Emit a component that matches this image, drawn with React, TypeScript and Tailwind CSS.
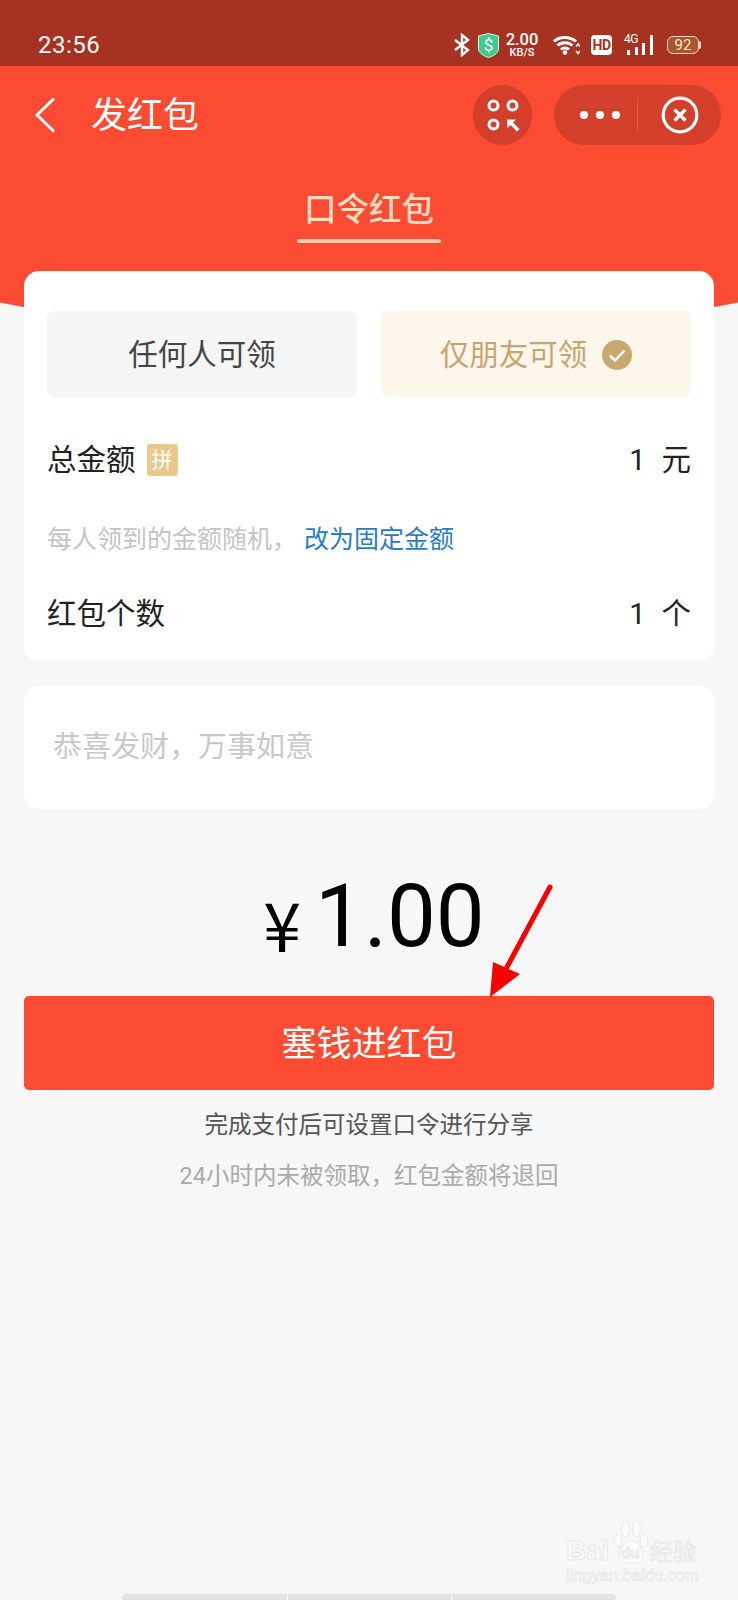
import React from "react";

const cjk = "font-['Roboto','Noto_Sans_CJK_SC',sans-serif]";

function StatusIcons() {
  return (
    <div className="flex items-center h-[26px]">
      <svg width="16" height="24" viewBox="0 0 16 24" fill="none" stroke="#fff" strokeWidth="2.4" className="mr-[8px]">
        <path d="M1 7l13 10-6 5V2l6 5L1 17" />
      </svg>
      <svg width="21" height="25" viewBox="0 0 21 25" className="mr-[6px]">
        <path d="M10.5 0.5L20.5 3v13c0 4-6 7.500-10 8.500C6.500 23.500 0.500 20 0.500 16V3z" fill="#3ecb8f" stroke="#d8f5e8" strokeWidth="1" />
        <text x="10.500" y="18" textAnchor="middle" fontSize="17" fill="#fff" fontFamily="Roboto">$</text>
      </svg>
      <div className="w-[34px] mr-[14px] flex flex-col items-center text-white font-['Roboto',sans-serif] font-medium mt-[-1px]">
        <span className="text-[16.500px] leading-[15px]">2.00</span>
        <span className="text-[11px] leading-[10px] mt-[1px]">KB/S</span>
      </div>
      <svg width="27" height="20" viewBox="0 0 27 20" fill="none" stroke="#fff" className="mr-[11px]">
        <path d="M1 6.500C6 1 17 1 23 6.500" strokeWidth="3" />
        <path d="M4.500 10.500C8 7 15 6.500 19.500 10.500" strokeWidth="3" />
        <path d="M8 14.500c2-2 6-2 8 0" strokeWidth="2.800" />
        <circle cx="12" cy="17.500" r="2.200" fill="#fff" stroke="none" />
        <path d="M23 11.500l2-2.500 2 2.500M23 16l2 2.500 2-2.500" strokeWidth="1.500" />
      </svg>
      <div className="w-[21px] h-[20px] bg-white rounded-[4px] mr-[12px] flex items-center justify-center text-[#a83222] text-[14px] leading-none font-bold font-['Roboto',sans-serif] tracking-[-0.500px]">
        HD
      </div>
      <div className="relative w-[30px] h-[20px] mr-[13px]">
        <span className="absolute left-0 top-[-2px] text-white text-[12px] leading-[12px] tracking-[-0.500px] font-['Roboto',sans-serif]">4G</span>
        <span className="absolute left-[3px] bottom-0 w-[3px] h-[5px] bg-white" />
        <span className="absolute left-[11px] bottom-0 w-[3px] h-[8px] bg-white" />
        <span className="absolute left-[18px] bottom-0 w-[3px] h-[12px] bg-white" />
        <span className="absolute left-[26px] bottom-0 w-[3px] h-[20px] bg-white" />
      </div>
      <div className="flex items-center">
        <div className="w-[32px] h-[18px] rounded-[6px] border border-[#f3d9c4] bg-[#a9552d] flex items-center justify-center text-[#fbe9d8] text-[15px] leading-none font-['Roboto',sans-serif]">
          92
        </div>
        <span className="w-[2px] h-[8px] bg-[#f3d9c4] rounded-r-[2px]" />
      </div>
    </div>
  );
}

function Row({ label, value, unit, badge }: { label: string; value: string; unit: string; badge?: boolean }) {
  return (
    <div className="flex items-center justify-between h-[32px] text-[29.500px] leading-[32px] text-[#222]">
      <div className="flex items-center">
        <span>{label}</span>
        {badge && (
          <span className="ml-[11px] w-[31px] h-[32px] rounded-[3px] bg-[#e8c88c] text-white text-[21px] leading-[32px] text-center">拼</span>
        )}
      </div>
      <div className="flex items-center">
        <span className="mr-[16px] text-[29px]">{value}</span>
        <span>{unit}</span>
      </div>
    </div>
  );
}

function Watermark() {
  return (
    <div className="absolute left-[566px] top-[1520px] w-[134px] h-[64px] text-white select-none">
      <svg width="38" height="44" viewBox="0 0 38 44" className="absolute left-[46px] top-0" fill="#fbfbfb" stroke="#ebebeb" strokeWidth="1.200">
        <ellipse cx="6" cy="21" rx="4" ry="6" />
        <ellipse cx="13.500" cy="9" rx="4" ry="8" />
        <ellipse cx="24.500" cy="9" rx="4" ry="8" />
        <ellipse cx="32" cy="21" rx="4" ry="6" />
        <path d="M19 20c6 0 12 9 12 16 0 6-5 7-12 7s-12-1-12-7c0-7 6-16 12-16z" />
      </svg>
      <span className="absolute left-0 top-[16px] text-[28px] leading-[30px] font-bold text-[#fbfbfb] font-['Liberation_Sans',sans-serif] [-webkit-text-stroke:1px_#e8e8e8]">Bai</span>
      <span className="absolute left-[55px] top-[25px] text-[15px] leading-[16px] font-bold text-[#f7f7f7] font-['Liberation_Sans',sans-serif] [-webkit-text-stroke:1px_#e6e6e6]">du</span>
      <span className="absolute left-[84px] top-[16px] text-[23px] leading-[28px] whitespace-nowrap text-[#fbfbfb] font-['Noto_Sans_CJK_SC',sans-serif] [-webkit-text-stroke:1px_#e8e8e8]">经验</span>
      <span className="absolute left-0 top-[46px] text-[16.500px] leading-[18px] text-[#fbfbfb] font-['Liberation_Sans',sans-serif] [-webkit-text-stroke:0.800px_#e8e8e8] whitespace-nowrap">jingyan.baidu.com</span>
    </div>
  );
}

export default function App() {
  return (
    <div className={`relative w-[738px] h-[1600px] overflow-hidden bg-[#f7f7f7] ${cjk}`}>
      {/* red arc behind the header */}
      <div className="absolute left-[-1511px] top-[-3421px] w-[3760px] h-[3760px] rounded-full bg-[#fb4b33]" />

      <div className="relative">
        <div className="h-[66px] bg-[#a83222] flex items-start justify-between pl-[38px] pr-[37px] pt-[32px]">
          <span className="text-white text-[24px] leading-[26px] font-['Roboto',sans-serif] tracking-[0.500px]">23:56</span>
          <StatusIcons />
        </div>

        <div className="h-[60px] mt-[19px] flex items-center pl-[34px] pr-[17px]">
          <svg width="22" height="36" viewBox="0 0 22 36" fill="none" stroke="#fff" strokeWidth="3">
            <path d="M20 1.500L3 18l17 16.500" />
          </svg>
          <span className="ml-[35px] text-white text-[36px] leading-[60px] pt-[2px]">发红包</span>
          <div className="ml-auto w-[59px] h-[60px] rounded-full bg-[#d33f2b] flex items-center justify-center">
            <svg width="34" height="34" viewBox="0 0 34 34" fill="none" stroke="#fff" strokeWidth="3">
              <circle cx="7.500" cy="7.500" r="4.500" />
              <circle cx="26.500" cy="7.500" r="4.500" />
              <circle cx="7.500" cy="26.500" r="4.500" />
              <path d="M21 21.500h9l-3 3 6.500 6.500-2.500 2.500-6.500-6.500-3 3z" fill="#fff" stroke="none" />
            </svg>
          </div>
          <div className="ml-[22px] w-[167px] h-[60px] rounded-full bg-[#d33f2b] flex items-center">
            <div className="w-[83px] flex items-center justify-center gap-[8px] pl-[8px]">
              <span className="w-[8px] h-[8px] rounded-full bg-white" />
              <span className="w-[8px] h-[8px] rounded-full bg-white" />
              <span className="w-[8px] h-[8px] rounded-full bg-white" />
            </div>
            <div className="w-px h-[34px] bg-[#e05a45]" />
            <div className="flex-1 flex items-center justify-center">
              <svg width="38" height="38" viewBox="0 0 38 38" fill="none" stroke="#fff" strokeWidth="3.200">
                <circle cx="19" cy="19" r="16.800" />
                <path d="M13.500 13.500l11 11M24.500 13.500l-11 11" strokeWidth="3.400" />
              </svg>
            </div>
          </div>
        </div>

        <div className="mt-[43px] flex flex-col items-center">
          <span className="text-[32.500px] leading-[40px] pt-[2px] h-[40px] font-medium text-[#ffdcc0]">口令红包</span>
          <div className="mt-[11px] w-[144px] h-[4px] rounded-full bg-[#ffcdaa]" />
        </div>

        <div className="mx-[24px] mt-[28px] h-[390px] rounded-[15px] bg-white px-[23px] pt-[40px]">
          <div className="flex gap-[24px]">
            <div className="w-[310px] h-[86px] pt-[2px] rounded-[7px] bg-[#f5f5f5] flex items-center justify-center text-[29.500px] text-[#444]">任何人可领</div>
            <div className="w-[310px] h-[86px] pt-[2px] rounded-[7px] bg-[#fdf6ea] flex items-center justify-center text-[29.500px] text-[#c8a46e]">
              <span>仅朋友可领</span>
              <svg width="30" height="30" viewBox="0 0 30 30" className="ml-[15px]">
                <circle cx="15" cy="15" r="15" fill="#c9a870" />
                <path d="M8 15.500l5 5 9.500-10" fill="none" stroke="#fff" strokeWidth="2.500" />
              </svg>
            </div>
          </div>
          <div className="mt-[47px]">
            <Row label="总金额" value="1" unit="元" badge />
          </div>
          <div className="mt-[48px] h-[32px] text-[25px] leading-[32px] text-[#c4c4c4]">
            每人领到的金额随机，<span className="ml-[7px] text-[#2a7bc8]">改为固定金额</span>
          </div>
          <div className="mt-[42px]">
            <Row label="红包个数" value="1" unit="个" />
          </div>
        </div>

        <div className="mx-[24px] mt-[25px] h-[123px] rounded-[15px] bg-white pl-[29px] flex items-center text-[29px] text-[#c8c8c8]">
          恭喜发财，万事如意
        </div>

        <div className="mt-[55px] h-[132px] flex items-end justify-center text-black font-['Roboto',sans-serif] pl-[10px]">
          <span className="text-[68px] leading-[68px] mr-[14px] mb-[39px] font-['Noto_Sans_CJK_SC',sans-serif]">¥</span>
          <span className="text-[87px] leading-[110px] mb-[25px]">1.00</span>
        </div>

        <div className="mx-[24px] h-[94px] pt-[4px] rounded-[5px] bg-[#fb4b33] flex items-center justify-center text-white text-[35px]">
          塞钱进红包
        </div>

        <div className="mt-[19px] text-center text-[23.500px] leading-[32px] text-[#555]">完成支付后可设置口令进行分享</div>
        <div className="mt-[19px] text-center text-[23.500px] leading-[32px] text-[#aaa]">24小时内未被领取，红包金额将退回</div>
      </div>

      {/* annotation arrow */}
      <svg className="absolute left-[480px] top-[880px]" width="80" height="125" viewBox="0 0 80 125">
        <path d="M70 7L27 87" stroke="#f60000" strokeWidth="5" strokeLinecap="round" fill="none" />
        <path d="M10 117L13 82 40 94z" fill="#f60000" />
      </svg>

      <Watermark />

      <div className="absolute left-[122px] bottom-0 h-[6px] w-[494px] rounded-t-[4px] bg-[#e3e3e3] flex">
        <span className="ml-[165px] w-px h-full bg-[#f7f7f7]" />
        <span className="ml-[163px] w-px h-full bg-[#f7f7f7]" />
      </div>
    </div>
  );
}
